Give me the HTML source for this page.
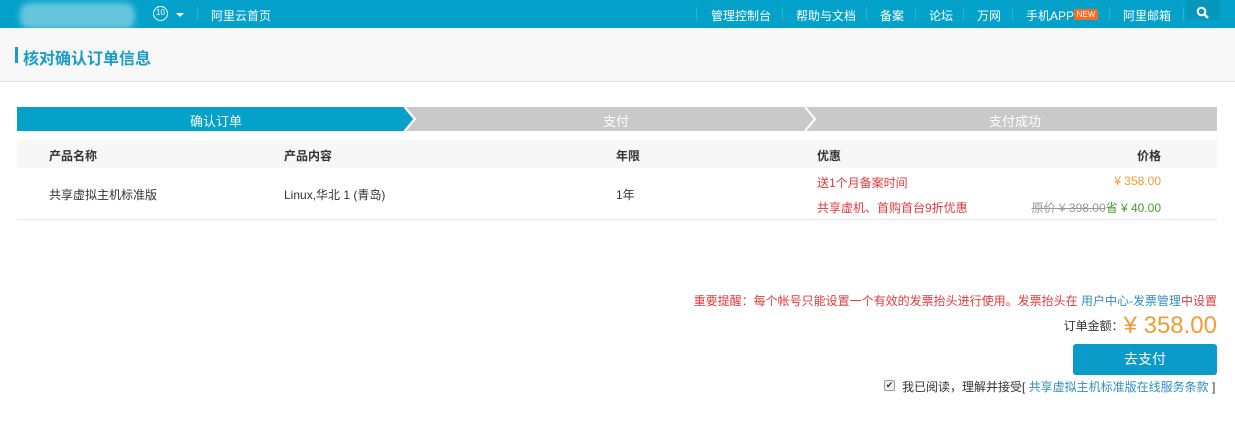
<!DOCTYPE html>
<html><head><meta charset="utf-8"><style>
*{margin:0;padding:0;box-sizing:border-box}
body{width:1235px;height:447px;background:#fff;font-family:"Liberation Sans","Noto Sans CJK SC",sans-serif;font-size:12px;color:#333;position:relative;overflow:hidden}
.a{position:absolute;white-space:nowrap}
.top{position:absolute;left:0;top:0;width:1235px;height:28px;background:#04a2ca}
.nav{color:#fff;font-size:12px;top:7px}
.sep{position:absolute;top:7px;width:1px;height:14px;background:#2bb3d4}
</style></head><body>
<div class="top"></div>
<div class="a" style="left:20px;top:3px;width:115px;height:26px;background:#7fd0e4;border-radius:10px;filter:blur(3px);opacity:.8"></div>
<div class="a" style="left:153px;top:6px;width:15px;height:15px;border:1.5px solid #fff;border-radius:50%;color:#fff;font-size:8px;text-align:center;line-height:12px">10</div>
<div class="a" style="left:176px;top:13px;border:4px solid transparent;border-top:4px solid #fff;border-bottom:0"></div>
<div class="sep" style="left:197px"></div>
<div class="a nav" style="left:211px">阿里云首页</div>
<div class="sep" style="left:696px"></div>
<div class="a nav" style="left:711px">管理控制台</div>
<div class="sep" style="left:782px"></div>
<div class="a nav" style="left:796px">帮助与文档</div>
<div class="sep" style="left:866px"></div>
<div class="a nav" style="left:880px">备案</div>
<div class="sep" style="left:915px"></div>
<div class="a nav" style="left:929px">论坛</div>
<div class="sep" style="left:963px"></div>
<div class="a nav" style="left:977px">万网</div>
<div class="sep" style="left:1012px"></div>
<div class="a nav" style="left:1026px">手机APP</div>
<div class="a" style="left:1074px;top:9px;width:24px;height:11px;background:#f36d21;color:#fff;font-size:8px;line-height:11px;text-align:center">NEW</div>
<div class="sep" style="left:1109px"></div>
<div class="a nav" style="left:1123px">阿里邮箱</div>
<div class="sep" style="left:1183px"></div>
<div class="a" style="left:1186px;top:0;width:34px;height:20px;background:#0796bc"></div>
<svg class="a" style="left:1196px;top:6px" width="14" height="14" viewBox="0 0 14 14"><circle cx="5.5" cy="5.5" r="3.8" stroke="#fff" stroke-width="2" fill="none"/><path d="M8.3 8.3L12 12" stroke="#fff" stroke-width="2.4"/></svg>

<div class="a" style="left:0;top:28px;width:1235px;height:54px;background:#f8f8f8;border-bottom:1px solid #e4e4e4"></div>
<div class="a" style="left:15px;top:47px;width:3px;height:16px;background:#1a9cc5"></div>
<div class="a" style="left:23px;top:45px;font-size:16px;font-weight:bold;color:#1a9cc5">核对确认订单信息</div>

<svg class="a" style="left:17px;top:107px" width="1200" height="24">
<rect x="0" y="0" width="1200" height="24" fill="#c9c9c9"/>
<polygon points="0,0 386,0 396,12 386,24 0,24" fill="#04a2ca"/>
<polyline points="388,0 398,12 388,24" fill="none" stroke="#fff" stroke-width="2"/>
<polyline points="788,0 798,12 788,24" fill="none" stroke="#fff" stroke-width="2"/>
</svg>
<div class="a" style="left:190px;top:111px;color:#fff;font-size:13px">确认订单</div>
<div class="a" style="left:603px;top:111px;color:#fff;font-size:13px">支付</div>
<div class="a" style="left:989px;top:111px;color:#fff;font-size:13px">支付成功</div>

<div class="a" style="left:17px;top:140px;width:1200px;height:28px;background:#f7f7f7"></div>
<div class="a" style="left:49px;top:147px;font-weight:bold">产品名称</div>
<div class="a" style="left:284px;top:147px;font-weight:bold">产品内容</div>
<div class="a" style="left:616px;top:147px;font-weight:bold">年限</div>
<div class="a" style="left:817px;top:147px;font-weight:bold">优惠</div>
<div class="a" style="left:1137px;top:147px;font-weight:bold">价格</div>
<div class="a" style="left:49px;top:186px">共享虚拟主机标准版</div>
<div class="a" style="left:284px;top:186px">Linux,华北 1 (青岛)</div>
<div class="a" style="left:616px;top:186px">1年</div>
<div class="a" style="left:817px;top:174px;color:#e4393c">送1个月备案时间</div>
<div class="a" style="left:817px;top:199px;color:#e4393c">共享虚机、首购首台9折优惠</div>
<div class="a" style="right:74px;top:174px;color:#f39c34">¥ 358.00</div>
<div class="a" style="right:74px;top:199px"><span style="color:#999;text-decoration:line-through">原价 ¥ 398.00</span><span style="color:#4a9a2e">省 ¥ 40.00</span></div>
<div class="a" style="left:17px;top:219px;width:1200px;height:1px;background:#e5e5e5"></div>

<div class="a" style="right:18px;top:292px;color:#e4393c">重要提醒：每个帐号只能设置一个有效的发票抬头进行使用。发票抬头在 <span style="color:#2e8fc0">用户中心-发票管理</span>中设置</div>
<div class="a" style="right:18px;top:312px;"><span style="font-size:12px;color:#333;vertical-align:3px">订单金额：</span><span style="font-size:24px;color:#f39c34">¥ 358.00</span></div>
<div class="a" style="left:1073px;top:344px;width:144px;height:31px;background:#0a9bc9;border-radius:3px;color:#fff;font-size:14px;text-align:center;line-height:31px">去支付</div>
<div class="a" style="left:884px;top:380px;width:11px;height:11px;border:1px solid #999;background:#eee;border-radius:2px;font-size:9px;line-height:9px;text-align:center;color:#333">✔</div>
<div class="a" style="left:902px;top:378px">我已阅读，理解并接受[ <span style="color:#2e8fc0">共享虚拟主机标准版在线服务条款</span> ]</div>
</body></html>
